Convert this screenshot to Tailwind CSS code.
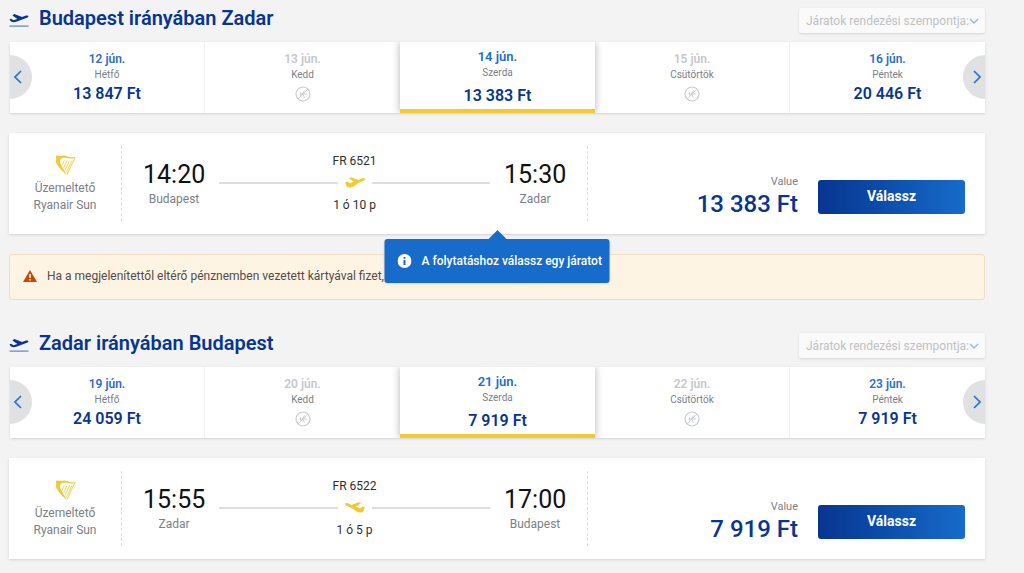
<!DOCTYPE html>
<html lang="hu">
<head>
  <meta charset="UTF-8" />
  <meta name="viewport" content="width=device-width, initial-scale=1" />
  <title>Budapest – Zadar járatok</title>
  <script src="https://cdn.jsdelivr.net/npm/@tailwindcss/browser@4"></script>
</head>
<body class="bg-[#f3f3f3] font-['Roboto',sans-serif] text-[#2e2e2e]">
  <!-- shared icons -->
  <svg class="hidden" aria-hidden="true">
    <symbol id="takeoff" viewBox="0 0 20 15">
      <path fill="#073590" d="M.6 6.200 2 5.800l2.400 1.400 4-1.200-5-3.600L5.300 1l7.700 2.900 3.400-1.100C17.800 2.400 19.300 2.500 19.400 3.300c.1.800-1 1.300-2.200 1.700L8 8.500c-2.200.8-4.400 1-5.400.3C1.600 8.200.9 7.200.6 6.200Z" />
      <path fill="#5b80c4" d="M.5 12.500h19v1.200H.5z" />
    </symbol>
    <symbol id="plane" viewBox="0 0 20 11">
      <path fill="#f1c933" d="M.4 5 2.500 4.500 5 6.200 9 4.800 3.800 1.300 6.500.3 13.400 2.900 16.300 1.600C18 .9 19.500.7 19.900 1.600c.3.900-.7 1.800-2.100 2.400L12.500 6.500 8.400 9.500C6.500 10.700 3.200 10.800 2 9.800 1 8.900.6 6.700.4 5Z" />
    </symbol>
    <symbol id="harp" viewBox="0 0 21 21">
      <path fill="#f1c933" d="M.8 1.800C1.200.6 2.400.2 3.600.8c2 .7 4-.7 6.900-.1 2.800.6 6 2.400 10.300 1.300-1.200 1.400-3.100 1.700-5.200 1.500C12.200 3.200 9.600 2 7 3.200 4.800 4.200 4.500 6 5.300 8.200c1 2.800 4 7 6.600 11.800-3.400-2.800-7.600-6.600-9.400-10.200C1.600 8.200.5 7.300 1 5.800c.4-1 .3-2.300-.2-4Z" />
      <path fill="none" stroke="#f1c933" stroke-width=".8" d="M9.300 5.500 7.200 10.500M11.900 5.500 8.700 13M14.400 5.500 10 15.500M17 5.500 11.300 17.500" />
      <path fill="none" stroke="#f1c933" stroke-width=".9" d="M19.800 3 12 19.500" />
    </symbol>
    <symbol id="noflight" viewBox="0 0 16 16">
      <g fill="none" stroke="#c9ccd1">
        <circle cx="8" cy="8" r="7" stroke-width="1.200" />
        <path d="M3 13 13 3" stroke-width=".9" />
        <path d="M4.500 8H12M9.500 4.500 7.500 8l2 3.500M5.500 6.500v3" />
      </g>
    </symbol>
    <symbol id="chevron" viewBox="0 0 8 14">
      <path fill="none" stroke="#2a72cf" stroke-width="1.700" d="m1 1 6 6-6 6" />
    </symbol>
  </svg>

  <main class="pl-[9px] pr-[39px] pb-4">
    <section>
      <header class="flex h-[42px] items-start justify-between">
        <h2 class="flex items-center gap-2.5 pt-1 text-xl leading-7 font-semibold text-[#073590]">
          <svg class="mt-1 h-[15px] w-5"><use href="#takeoff" /></svg>
          Budapest irányában Zadar
        </h2>
        <div class="relative mt-2">
          <select aria-label="Járatok rendezési szempontja" class="block h-[25px] w-[186px] appearance-none rounded-xs bg-[#fafafa] pl-[7px] text-xs text-[#bfc1c5] shadow-sm">
            <option>Járatok rendezési szempontja:</option>
          </select>
          <svg class="pointer-events-none absolute top-[9px] right-1.5 h-2 w-2.5" viewBox="0 0 10 8"><path fill="none" stroke="#8db8ec" stroke-width="1.300" d="m1 2 4 4 4-4" /></svg>
        </div>
      </header>

      <div class="relative ml-px bg-white shadow-sm">
        <ul class="grid h-[71px] grid-cols-5 overflow-hidden text-center">
          <li class="border-r border-[#f1f1f1]">
            <button class="w-full pt-2">
              <span class="block text-xs leading-[18px] font-semibold text-[#2a6fc9]">12 jún.</span>
              <span class="block text-[10px] leading-[14px] text-[#7b7f87]">Hétfő</span>
              <span class="block text-base leading-6 font-semibold text-[#073590]">13 847 Ft</span>
            </button>
          </li>
          <li>
            <button class="w-full pt-2" disabled>
              <span class="block text-xs leading-[18px] font-semibold text-[#c5c8cd]">13 jún.</span>
              <span class="block text-[10px] leading-[14px] text-[#7b7f87]">Kedd</span>
              <svg class="mx-auto mt-1 size-4"><use href="#noflight" /></svg>
            </button>
          </li>
          <li class="relative border-b-4 border-[#f1c933] bg-white shadow-[0_0_8px_rgba(0,0,0,0.3)]">
            <button class="w-full pt-1.5">
              <span class="block text-[13px] leading-[18px] font-semibold text-[#1b6fca]">14 jún.</span>
              <span class="block text-[10px] leading-[14px] text-[#7b7f87]">Szerda</span>
              <span class="block pt-1 text-base leading-6 font-semibold text-[#073590]">13 383 Ft</span>
            </button>
          </li>
          <li class="border-r border-[#f1f1f1]">
            <button class="w-full pt-2" disabled>
              <span class="block text-xs leading-[18px] font-semibold text-[#c5c8cd]">15 jún.</span>
              <span class="block text-[10px] leading-[14px] text-[#7b7f87]">Csütörtök</span>
              <svg class="mx-auto mt-1 size-4"><use href="#noflight" /></svg>
            </button>
          </li>
          <li>
            <button class="w-full pt-2">
              <span class="block text-xs leading-[18px] font-semibold text-[#2a6fc9]">16 jún.</span>
              <span class="block text-[10px] leading-[14px] text-[#7b7f87]">Péntek</span>
              <span class="block text-base leading-6 font-semibold text-[#073590]">20 446 Ft</span>
            </button>
          </li>
        </ul>
        <button aria-label="Előző napok" class="absolute top-[13px] left-0 flex h-11 w-[22px] items-center rounded-r-full bg-[#dfe1e3] pl-1">
          <svg class="h-3.5 w-2 rotate-180"><use href="#chevron" /></svg>
        </button>
        <button aria-label="Következő napok" class="absolute top-[13px] right-0 flex h-11 w-[22px] items-center justify-end rounded-l-full bg-[#dfe1e3] pr-1">
          <svg class="h-3.5 w-2"><use href="#chevron" /></svg>
        </button>
      </div>

      <article class="relative mt-5 flex h-[101px] bg-white py-[13px] shadow-sm">
        <div class="flex w-[113px] shrink-0 flex-col items-center border-r border-dashed border-[#dddddd] pt-[9px] text-center text-xs leading-[17px] text-[#7b7f87]">
          <svg class="mb-1 size-[21px]"><use href="#harp" /></svg>
          <p>Üzemeltető<br />Ryanair Sun</p>
        </div>
        <div class="flex w-[466px] shrink-0 items-center justify-between gap-3.5 border-r border-dashed border-[#dddddd] px-[21px] pb-0.5 text-center">
          <div class="w-[62px]">
            <p class="text-[25px] leading-8 text-[#111111]">14:20</p>
            <p class="text-xs leading-4 text-[#7b7f87]">Budapest</p>
          </div>
          <div class="flex-1 text-xs leading-4">
            <p>FR 6521</p>
            <div class="flex h-7 items-center gap-[7px]">
              <span class="h-0.5 flex-1 bg-[#dedede]"></span>
              <svg class="h-[11px] w-5"><use href="#plane" /></svg>
              <span class="h-0.5 flex-1 bg-[#dedede]"></span>
            </div>
            <p>1 ó 10 p</p>
          </div>
          <div class="w-[62px]">
            <p class="text-[25px] leading-8 text-[#111111]">15:30</p>
            <p class="text-xs leading-4 text-[#7b7f87]">Zadar</p>
          </div>
        </div>
        <div class="flex flex-1 items-center justify-end gap-5 pt-[26px] pr-5">
          <div class="pb-0.5 text-right">
            <p class="text-[11px] leading-4 text-[#7b7f87]">Value</p>
            <p class="text-2xl leading-7 font-medium text-[#073590]">13 383 Ft</p>
          </div>
          <button class="h-[34px] w-[147px] rounded-[3px] bg-linear-to-r from-[#073590] to-[#176bca] pb-0.5 text-sm font-bold text-white">Válassz</button>
        </div>

        <div role="tooltip" class="absolute top-full left-1/2 z-10 mt-[5px] flex h-11 w-[225px] -translate-x-1/2 items-center gap-2.5 rounded-[3px] bg-[#176bca] pl-[13px] text-xs font-medium whitespace-nowrap text-white shadow-sm">
          <svg class="absolute -top-[9px] left-1/2 h-[9px] w-[18px] -translate-x-1/2" viewBox="0 0 18 9"><path fill="#176bca" d="M0 9 9 0l9 9z" /></svg>
          <svg class="size-3.5" viewBox="0 0 14 14"><circle cx="7" cy="7" r="7" fill="#fff" /><path fill="#176bca" d="M6 3h2v1.700H6zM6 6h2v5H6z" /></svg>
          A folytatáshoz válassz egy járatot
        </div>
      </article>

      <div role="alert" class="mt-5 flex h-[46px] items-center gap-2.5 rounded-[3px] border border-[#f4dcc0] bg-[#fef4e4] px-[13px] pb-0.5 text-xs text-[#4f4d4a]">
        <svg class="h-3 w-3.5" viewBox="0 0 14 12"><path fill="#c34a06" d="M7 0 14 12H0Z" /><path fill="#fff" d="M6.300 4h1.400v4H6.300zM6.300 9h1.400v1.400H6.300z" /></svg>
        <p>Ha a megjelenítettől eltérő pénznemben vezetett kártyával fizet, a</p>
      </div>
    </section>

    <section class="mt-[25px]">
      <header class="flex h-[42px] items-start justify-between">
        <h2 class="flex items-center gap-2.5 pt-1 text-xl leading-7 font-semibold text-[#073590]">
          <svg class="mt-1 h-[15px] w-5"><use href="#takeoff" /></svg>
          Zadar irányában Budapest
        </h2>
        <div class="relative mt-2">
          <select aria-label="Járatok rendezési szempontja" class="block h-[25px] w-[186px] appearance-none rounded-xs bg-[#fafafa] pl-[7px] text-xs text-[#bfc1c5] shadow-sm">
            <option>Járatok rendezési szempontja:</option>
          </select>
          <svg class="pointer-events-none absolute top-[9px] right-1.5 h-2 w-2.5" viewBox="0 0 10 8"><path fill="none" stroke="#8db8ec" stroke-width="1.300" d="m1 2 4 4 4-4" /></svg>
        </div>
      </header>

      <div class="relative ml-px bg-white shadow-sm">
        <ul class="grid h-[71px] grid-cols-5 overflow-hidden text-center">
          <li class="border-r border-[#f1f1f1]">
            <button class="w-full pt-2">
              <span class="block text-xs leading-[18px] font-semibold text-[#2a6fc9]">19 jún.</span>
              <span class="block text-[10px] leading-[14px] text-[#7b7f87]">Hétfő</span>
              <span class="block text-base leading-6 font-semibold text-[#073590]">24 059 Ft</span>
            </button>
          </li>
          <li>
            <button class="w-full pt-2" disabled>
              <span class="block text-xs leading-[18px] font-semibold text-[#c5c8cd]">20 jún.</span>
              <span class="block text-[10px] leading-[14px] text-[#7b7f87]">Kedd</span>
              <svg class="mx-auto mt-1 size-4"><use href="#noflight" /></svg>
            </button>
          </li>
          <li class="relative border-b-4 border-[#f1c933] bg-white shadow-[0_0_8px_rgba(0,0,0,0.3)]">
            <button class="w-full pt-1.5">
              <span class="block text-[13px] leading-[18px] font-semibold text-[#1b6fca]">21 jún.</span>
              <span class="block text-[10px] leading-[14px] text-[#7b7f87]">Szerda</span>
              <span class="block pt-1 text-base leading-6 font-semibold text-[#073590]">7 919 Ft</span>
            </button>
          </li>
          <li class="border-r border-[#f1f1f1]">
            <button class="w-full pt-2" disabled>
              <span class="block text-xs leading-[18px] font-semibold text-[#c5c8cd]">22 jún.</span>
              <span class="block text-[10px] leading-[14px] text-[#7b7f87]">Csütörtök</span>
              <svg class="mx-auto mt-1 size-4"><use href="#noflight" /></svg>
            </button>
          </li>
          <li>
            <button class="w-full pt-2">
              <span class="block text-xs leading-[18px] font-semibold text-[#2a6fc9]">23 jún.</span>
              <span class="block text-[10px] leading-[14px] text-[#7b7f87]">Péntek</span>
              <span class="block text-base leading-6 font-semibold text-[#073590]">7 919 Ft</span>
            </button>
          </li>
        </ul>
        <button aria-label="Előző napok" class="absolute top-[13px] left-0 flex h-11 w-[22px] items-center rounded-r-full bg-[#dfe1e3] pl-1">
          <svg class="h-3.5 w-2 rotate-180"><use href="#chevron" /></svg>
        </button>
        <button aria-label="Következő napok" class="absolute top-[13px] right-0 flex h-11 w-[22px] items-center justify-end rounded-l-full bg-[#dfe1e3] pr-1">
          <svg class="h-3.5 w-2"><use href="#chevron" /></svg>
        </button>
      </div>

      <article class="mt-5 flex h-[101px] bg-white py-[13px] shadow-sm">
        <div class="flex w-[113px] shrink-0 flex-col items-center border-r border-dashed border-[#dddddd] pt-[9px] text-center text-xs leading-[17px] text-[#7b7f87]">
          <svg class="mb-1 size-[21px]"><use href="#harp" /></svg>
          <p>Üzemeltető<br />Ryanair Sun</p>
        </div>
        <div class="flex w-[466px] shrink-0 items-center justify-between gap-3.5 border-r border-dashed border-[#dddddd] px-[21px] pb-0.5 text-center">
          <div class="w-[62px]">
            <p class="text-[25px] leading-8 text-[#111111]">15:55</p>
            <p class="text-xs leading-4 text-[#7b7f87]">Zadar</p>
          </div>
          <div class="flex-1 text-xs leading-4">
            <p>FR 6522</p>
            <div class="flex h-7 items-center gap-[7px]">
              <span class="h-0.5 flex-1 bg-[#dedede]"></span>
              <svg class="h-[11px] w-5 -scale-x-100"><use href="#plane" /></svg>
              <span class="h-0.5 flex-1 bg-[#dedede]"></span>
            </div>
            <p>1 ó 5 p</p>
          </div>
          <div class="w-[62px]">
            <p class="text-[25px] leading-8 text-[#111111]">17:00</p>
            <p class="text-xs leading-4 text-[#7b7f87]">Budapest</p>
          </div>
        </div>
        <div class="flex flex-1 items-center justify-end gap-5 pt-[26px] pr-5">
          <div class="pb-0.5 text-right">
            <p class="text-[11px] leading-4 text-[#7b7f87]">Value</p>
            <p class="text-2xl leading-7 font-medium text-[#073590]">7 919 Ft</p>
          </div>
          <button class="h-[34px] w-[147px] rounded-[3px] bg-linear-to-r from-[#073590] to-[#176bca] pb-0.5 text-sm font-bold text-white">Válassz</button>
        </div>
      </article>
    </section>
  </main>
</body>
</html>
